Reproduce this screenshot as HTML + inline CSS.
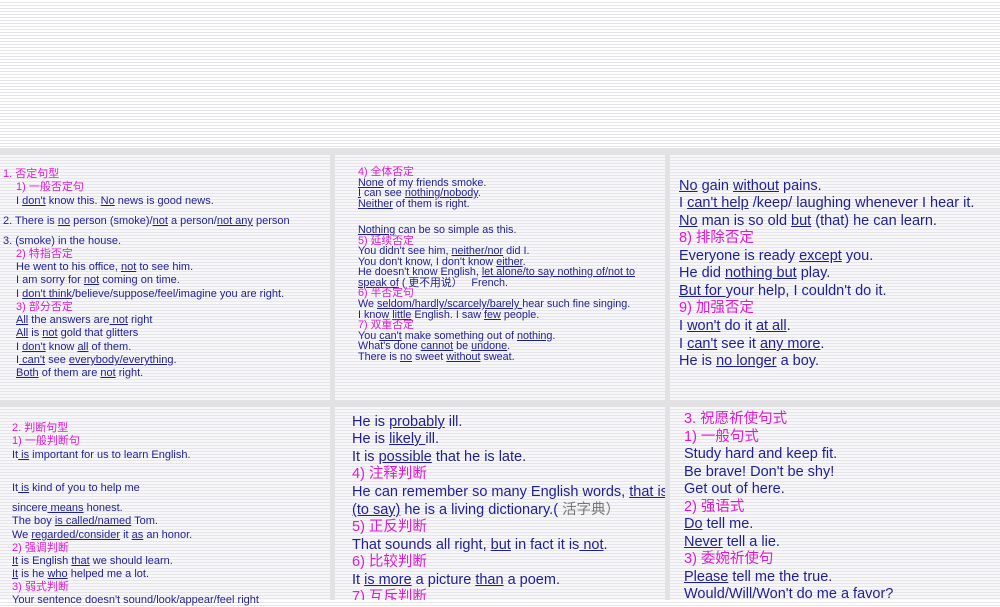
<!DOCTYPE html><html><head><meta charset="utf-8"><style>
body{margin:0;width:1000px;height:600px;overflow:hidden;position:relative;font-family:"Liberation Sans","Noto Sans CJK SC",sans-serif;
background:repeating-linear-gradient(180deg,#ffffff 0 2px,#e4e4ea 2px 3px);}
.p{position:absolute;background:repeating-linear-gradient(180deg,#f7f7f9 0 2px,#e6e6ea 2px 3px);}
.g{position:absolute;background:#e2e2e4}
.l{position:absolute;white-space:nowrap;color:#1f1f94;}
.k{color:#e01ad2}
u{text-decoration:underline;}
.a .l{font-size:11px;line-height:13px}
.b .l{font-size:10.8px;line-height:13px}
.c .l{font-size:14.5px;line-height:18px}
</style></head><body>
<div class="g" style="left:0;top:148px;width:1000px;height:7px"></div>
<div class="g" style="left:0;top:400px;width:1000px;height:7px"></div>
<div class="g" style="left:330px;top:148px;width:5px;height:452px"></div>
<div class="g" style="left:665px;top:148px;width:5px;height:452px"></div>
<div class="p" style="left:0;top:155px;width:330px;height:245px"></div>
<div class="p" style="left:335px;top:155px;width:330px;height:245px"></div>
<div class="p" style="left:670px;top:155px;width:330px;height:245px"></div>
<div class="p" style="left:0;top:407px;width:330px;height:193px"></div>
<div class="p" style="left:335px;top:407px;width:330px;height:193px"></div>
<div class="p" style="left:670px;top:407px;width:330px;height:193px"></div>

<div class="a">
<div class="l k" style="left:3px;top:168px">1. 否定句型</div>
<div class="l k" style="left:16px;top:181px">1) 一般否定句</div>
<div class="l" style="left:16px;top:195px">I <u>don't</u> know this. <u>No</u> news is good news.</div>
<div class="l" style="left:3px;top:215px">2. There is <u>no</u> person (smoke)/<u>not</u> a person/<u>not any</u> person</div>
<div class="l" style="left:3px;top:235px">3. (smoke) in the house.</div>
<div class="l k" style="left:16px;top:248px">2) 特指否定</div>
<div class="l" style="left:16px;top:261px">He went to his office, <u>not</u> to see him.</div>
<div class="l" style="left:16px;top:274px">I am sorry for <u>not</u> coming on time.</div>
<div class="l" style="left:16px;top:288px">I <u>don't think</u>/believe/suppose/feel/imagine you are right.</div>
<div class="l k" style="left:16px;top:301px">3) 部分否定</div>
<div class="l" style="left:16px;top:314px"><u>All</u> the answers are<u> not</u> right</div>
<div class="l" style="left:16px;top:327px"><u>All</u> is <u>not</u> gold that glitters</div>
<div class="l" style="left:16px;top:341px">I <u>don't</u> know <u>all</u> of them.</div>
<div class="l" style="left:16px;top:354px">I<u> can't</u> see <u>everybody/everything</u>.</div>
<div class="l" style="left:16px;top:367px"><u>Both</u> of them are <u>not</u> right.</div>

<div class="l k" style="left:12px;top:422px">2. 判断句型</div>
<div class="l k" style="left:12px;top:435px">1) 一般判断句</div>
<div class="l" style="left:12px;top:449px">It<u> is</u> important for us to learn English.</div>
<div class="l" style="left:12px;top:482px">It<u> is</u> kind of you to help me</div>
<div class="l" style="left:12px;top:502px">sincere<u> means</u> honest.</div>
<div class="l" style="left:12px;top:515px">The boy <u>is called/named</u> Tom.</div>
<div class="l" style="left:12px;top:529px">We <u>regarded/consider</u> it <u>as</u> an honor.</div>
<div class="l k" style="left:12px;top:542px">2) 强调判断</div>
<div class="l" style="left:12px;top:555px"><u>It</u> is English <u>that</u> we should learn.</div>
<div class="l" style="left:12px;top:568px"><u>It</u> is he <u>who</u> helped me a lot.</div>
<div class="l k" style="left:12px;top:581px">3) 弱式判断</div>
<div class="l" style="left:12px;top:594px">Your sentence doesn't sound/look/appear/feel right</div>
</div>

<div class="b">
<div class="l k" style="left:358px;top:166px">4) 全体否定</div>
<div class="l" style="left:358px;top:177px"><u>None</u> of my friends smoke.</div>
<div class="l" style="left:358px;top:187px"><u>I</u> can see <u>nothing/nobody</u>.</div>
<div class="l" style="left:358px;top:198px"><u>Neither</u> of them is right.</div>
<div class="l" style="left:358px;top:224px"><u>Nothing</u> can be so simple as this.</div>
<div class="l k" style="left:358px;top:235px">5) 延续否定</div>
<div class="l" style="left:358px;top:245px">You didn't see him, <u>neither/nor</u> did I.</div>
<div class="l" style="left:358px;top:256px">You don't know, I don't know <u>either</u>.</div>
<div class="l" style="left:358px;top:266px">He doesn't know English, <u>let alone/to say nothing of/not to</u></div>
<div class="l" style="left:358px;top:277px"><u>speak of</u> ( 更不用说）&nbsp;&nbsp; French.</div>
<div class="l k" style="left:358px;top:287px">6) 半否定句</div>
<div class="l" style="left:358px;top:298px">We <u>seldom/hardly/scarcely/barely </u>hear such fine singing.</div>
<div class="l" style="left:358px;top:309px">I know <u>little</u> English. I saw <u>few</u> people.</div>
<div class="l k" style="left:358px;top:319px">7) 双重否定</div>
<div class="l" style="left:358px;top:330px">You <u>can't</u> make something out of <u>nothing</u>.</div>
<div class="l" style="left:358px;top:340px">What's done <u>cannot</u> be <u>undone</u>.</div>
<div class="l" style="left:358px;top:351px">There is <u>no</u> sweet <u>without</u> sweat.</div>
</div>

<div class="c">
<div class="l" style="left:679px;top:177px"><u>No</u> gain <u>without</u> pains.</div>
<div class="l" style="left:679px;top:194px">I <u>can't help</u> /keep/ laughing whenever I hear it.</div>
<div class="l" style="left:679px;top:212px"><u>No</u> man is so old <u>but</u> (that) he can learn.</div>
<div class="l k" style="left:679px;top:229px">8) 排除否定</div>
<div class="l" style="left:679px;top:247px">Everyone is ready <u>except</u> you.</div>
<div class="l" style="left:679px;top:264px">He did <u>nothing but</u> play.</div>
<div class="l" style="left:679px;top:282px"><u>But for </u>your help, I couldn't do it.</div>
<div class="l k" style="left:679px;top:299px">9) 加强否定</div>
<div class="l" style="left:679px;top:317px">I <u>won't</u> do it <u>at all</u>.</div>
<div class="l" style="left:679px;top:335px">I <u>can't</u> see it <u>any more</u>.</div>
<div class="l" style="left:679px;top:352px">He is <u>no longer</u> a boy.</div>

<div style="position:absolute;left:335px;top:407px;width:330px;height:193px;overflow:hidden">
<div class="l" style="left:17px;top:6px">He is <u>probably</u> ill.</div>
<div class="l" style="left:17px;top:23px">He is <u>likely </u>ill.</div>
<div class="l" style="left:17px;top:41px">It is <u>possible</u> that he is late.</div>
<div class="l k" style="left:17px;top:58px">4) 注释判断</div>
<div class="l" style="left:17px;top:76px">He can remember so many English words, <u>that is</u></div>
<div class="l" style="left:17px;top:94px"><u>(to say)</u> he is a living dictionary.( <span style="color:#777">活字典）</span></div>
<div class="l k" style="left:17px;top:111px">5) 正反判断</div>
<div class="l" style="left:17px;top:129px">That sounds all right, <u>but</u> in fact it is<u> not</u>.</div>
<div class="l k" style="left:17px;top:146px">6) 比较判断</div>
<div class="l" style="left:17px;top:164px">It <u>is more</u> a picture <u>than</u> a poem.</div>
<div class="l k" style="left:17px;top:181px">7) 互斥判断</div>
</div>

<div class="l k" style="left:684px;top:410px">3. 祝愿祈使句式</div>
<div class="l k" style="left:684px;top:428px">1) 一般句式</div>
<div class="l" style="left:684px;top:445px">Study hard and keep fit.</div>
<div class="l" style="left:684px;top:463px">Be brave! Don't be shy!</div>
<div class="l" style="left:684px;top:480px">Get out of here.</div>
<div class="l k" style="left:684px;top:498px">2) 强语式</div>
<div class="l" style="left:684px;top:515px"><u>Do</u> tell me.</div>
<div class="l" style="left:684px;top:533px"><u>Never</u> tell a lie.</div>
<div class="l k" style="left:684px;top:550px">3) 委婉祈使句</div>
<div class="l" style="left:684px;top:568px"><u>Please</u> tell me the true.</div>
<div class="l" style="left:684px;top:585px">Would/Will/Won't do me a favor?</div>
</div>
</body></html>
